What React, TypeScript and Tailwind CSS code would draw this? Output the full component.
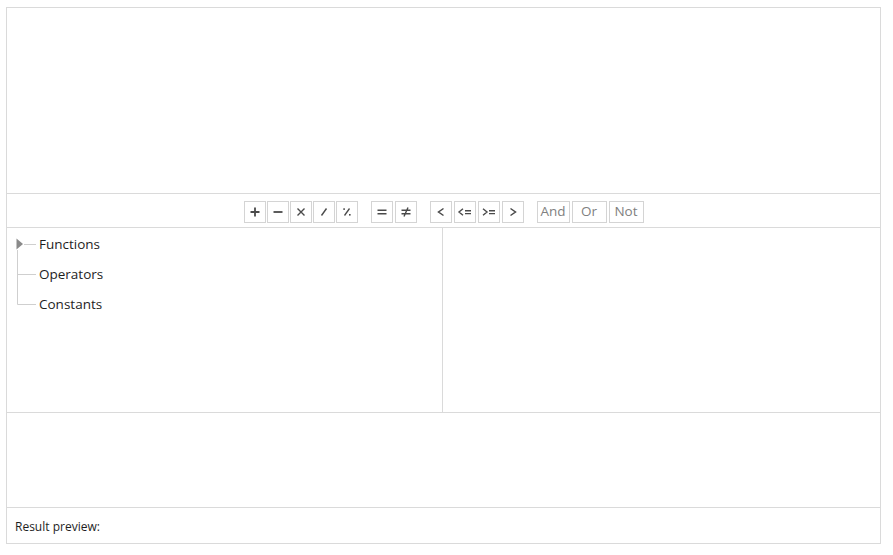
import React from "react";

const font = { fontFamily: '"Segoe UI", "Open Sans", "Noto Sans", sans-serif' };

function Btn({ children, w = "w-[22px]" }: { children: React.ReactNode; w?: string }) {
  return (
    <div
      className={`${w} h-[22px] border border-[#d4d4d4] flex items-center justify-center text-[#555] text-[13px] leading-none bg-white`}
    >
      {children}
    </div>
  );
}

const S = ({ d, sw = 1.6 }: { d: string; sw?: number }) => (
  <svg width="12" height="12" viewBox="0 0 12 12" fill="none" stroke="#4a4a4a" strokeWidth={sw} strokeLinecap="butt">
    <path d={d} />
  </svg>
);

export default function App() {
  return (
    <div className="w-[893px] h-[555px] bg-white pl-[6px] pt-[7px]" style={font}>
      <div className="w-[875px] h-[537px] border border-[#dadada] flex flex-col">
        <div className="h-[186px] border-b border-[#dadada] shrink-0" />
        <div className="h-[34px] border-b border-[#dadada] shrink-0 flex items-center justify-center gap-[13px] pt-[3px]">
          <div className="flex gap-[1px]">
            <Btn><S d="M6 1.5V10.5M1.5 6H10.5" sw={1.8} /></Btn>
            <Btn><S d="M1.5 6H10.5" sw={1.8} /></Btn>
            <Btn><S d="M2.5 2.5L9.5 9.5M9.5 2.5L2.5 9.5" sw={1.4} /></Btn>
            <Btn><S d="M8.5 2.5L3.5 9.5" sw={1.4} /></Btn>
            <Btn>
              <svg width="12" height="12" viewBox="0 0 12 12" fill="none" stroke="#4a4a4a" strokeWidth="1.3">
                <path d="M8.5 2.5L3.5 9.5" />
                <rect x="2.3" y="2.3" width="1.6" height="1.6" fill="#4a4a4a" stroke="none" />
                <rect x="8" y="8" width="1.6" height="1.6" fill="#4a4a4a" stroke="none" />
              </svg>
            </Btn>
          </div>
          <div className="flex gap-[2px]">
            <Btn><S d="M1.5 4.3H10.5M1.5 7.7H10.5" sw={1.5} /></Btn>
            <Btn><S d="M1.5 4.3H10.5M1.5 7.7H10.5M8 1.5L4 10.5" sw={1.4} /></Btn>
          </div>
          <div className="flex gap-[2px]">
            <Btn><S d="M8.5 2.5L3.5 6L8.5 9.5" sw={1.5} /></Btn>
            <Btn>
              <svg width="16" height="12" viewBox="0 0 16 12" fill="none" stroke="#4a4a4a" strokeWidth="1.4">
                <path d="M6 2.8L2 6L6 9.2M8 4.8H14M8 7.6H14" />
              </svg>
            </Btn>
            <Btn>
              <svg width="16" height="12" viewBox="0 0 16 12" fill="none" stroke="#4a4a4a" strokeWidth="1.4">
                <path d="M2 2.8L6 6L2 9.2M8 4.8H14M8 7.6H14" />
              </svg>
            </Btn>
            <Btn><S d="M3.5 2.5L8.5 6L3.5 9.5" sw={1.5} /></Btn>
          </div>
          <div className="flex gap-[2px]">
            <Btn w="w-[33px]"><span className="text-[13.5px] text-[#808080]">And</span></Btn>
            <Btn w="w-[35px]"><span className="text-[13.5px] text-[#808080]">Or</span></Btn>
            <Btn w="w-[35px]"><span className="text-[13.5px] text-[#808080]">Not</span></Btn>
          </div>
        </div>
        <div className="h-[185px] border-b border-[#dadada] shrink-0 flex">
          <div className="w-[436px] border-r border-[#dadada] shrink-0 relative">
            <svg className="absolute left-0 top-0" width="40" height="90" fill="none">
              <path d="M9.5 10.5L16 16L9.5 21.5Z" fill="#8a8a8a" />
              <path d="M17 16.5H29" stroke="#cfcfcf" />
              <path d="M10.5 22V76.5M10.5 46.5H29M10.5 76.5H29" stroke="#cfcfcf" />
            </svg>
            <div className="pl-[32px] pt-[7px] text-[13.5px] text-[#1e1e1e]">
              <div className="h-[30px] leading-[19px]">Functions</div>
              <div className="h-[30px] leading-[19px]">Operators</div>
              <div className="h-[30px] leading-[19px]">Constants</div>
            </div>
          </div>
          <div className="flex-1" />
        </div>
        <div className="h-[95px] border-b border-[#dadada] shrink-0" />
        <div className="flex-1 flex items-center pl-[8px] pt-[3px] text-[12px] text-[#1e1e1e]">Result preview:</div>
      </div>
    </div>
  );
}
